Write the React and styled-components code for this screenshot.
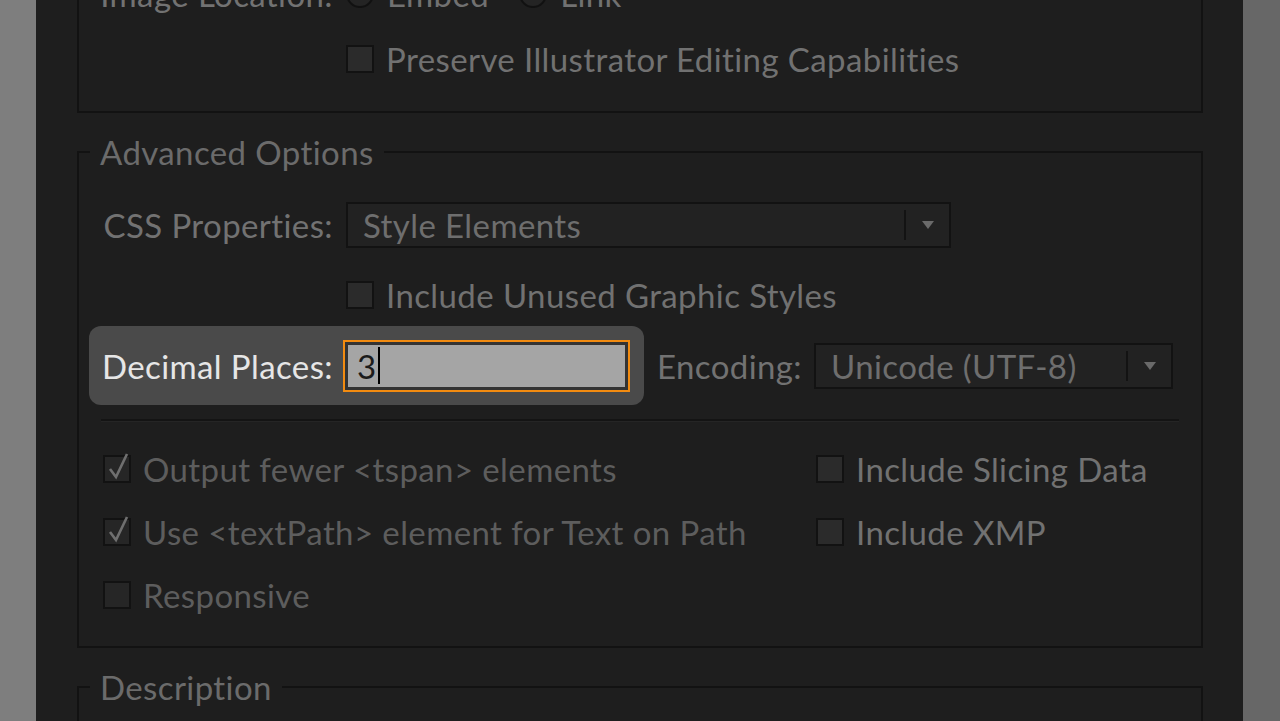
import styled, { createGlobalStyle } from 'styled-components';

const GlobalStyle = createGlobalStyle`
  html, body {
    margin: 0;
    padding: 0;
    background: #1e1e1e;
    overflow: hidden;
  }
  body {
    font-family: Lato, "Liberation Sans", sans-serif;
    letter-spacing: 0.4px;
  }
`;

const Screen = styled.div`
  display: flex;
  width: 1280px;
  height: 721px;
  overflow: hidden;
`;

const SideStrip = styled.div`
  flex: 0 0 ${(p) => p.$width}px;
  background: ${(p) => p.$color};
`;

const Dialog = styled.div`
  flex: 1;
  min-width: 0;
  background: #1e1e1e;
  padding: 0 40px 0 41px;
  overflow: hidden;
`;

const Content = styled.div`
  margin-top: -60px;
  display: flex;
  flex-direction: column;
  gap: 23px;
`;

const Group = styled.fieldset`
  margin: 0;
  min-width: 0;
  padding: ${(p) => p.$pt || 0}px 0 ${(p) => p.$pb || 0}px;
  border: 2px solid #121212;
  min-height: ${(p) => p.$minH || 0}px;
`;

const Legend = styled.legend`
  margin-left: 11px;
  padding: 0 10px;
  font-size: 33px;
  line-height: 32px;
  color: #6b6b6b;
`;

const FieldRow = styled.div`
  display: flex;
  align-items: center;
  height: ${(p) => p.$h}px;
  margin-top: ${(p) => p.$mt || 0}px;
  padding-left: ${(p) => p.$indent || 0}px;
`;

const Label = styled.span`
  flex: 0 0 ${(p) => p.$w || 267}px;
  box-sizing: border-box;
  padding-right: ${(p) => p.$gap || 13}px;
  text-align: right;
  font-size: 33px;
  color: ${(p) => (p.$bright ? '#e6e6e6' : '#727272')};
  white-space: nowrap;
`;

const Text = styled.span`
  font-size: 33px;
  color: ${(p) => (p.$dim ? '#5d5d5d' : '#717171')};
  white-space: nowrap;
`;

const Radio = styled.span`
  flex: 0 0 28px;
  height: 28px;
  box-sizing: border-box;
  border-radius: 50%;
  border: 2px solid #111;
  background: #242424;
  margin-right: 13px;
  display: flex;
  align-items: center;
  justify-content: center;
  &::after {
    content: '';
    width: 10px;
    height: 10px;
    border-radius: 50%;
    background: ${(p) => (p.$on ? '#555' : 'transparent')};
  }
`;

const RadioOption = styled.span`
  display: flex;
  align-items: center;
  margin-right: 30px;
`;

const Box = styled.span`
  position: relative;
  flex: 0 0 28px;
  height: 28px;
  box-sizing: border-box;
  border: 2px solid #121212;
  background: ${(p) => (p.$dim ? '#262626' : '#2b2b2b')};
  margin-right: 12px;
`;

const Tick = styled.svg`
  position: absolute;
  left: 2px;
  top: -5px;
  overflow: visible;
`;

const Select = styled.div`
  display: flex;
  align-items: center;
  width: ${(p) => p.$w}px;
  height: 46px;
  box-sizing: border-box;
  border: 2px solid #121212;
  background: #222;
`;

const SelectText = styled.span`
  flex: 1;
  padding-left: 15px;
  font-size: 33px;
  color: #6e6e6e;
  white-space: nowrap;
`;

const SelectDivider = styled.span`
  width: 2px;
  height: 30px;
  background: #131313;
`;

const ArrowCell = styled.span`
  flex: 0 0 43px;
  display: flex;
  align-items: center;
  justify-content: center;
`;

const Highlight = styled.div`
  display: flex;
  align-items: center;
  height: 79px;
  margin-left: 10px;
  padding-right: 14px;
  border-radius: 12px;
  background: #4a4a4a;
`;

const NumberField = styled.div`
  display: flex;
  align-items: center;
  width: 287px;
  height: 52px;
  box-sizing: border-box;
  border: 2px solid #f28b10;
  background: #a5a5a5;
  box-shadow: inset 0 0 0 3px #333;
  padding-left: 12px;
  font-size: 33px;
  color: #1b1b1b;
`;

const Caret = styled.span`
  width: 2px;
  height: 37px;
  margin-left: 1px;
  background: #000;
`;

const EncodingLabel = styled.span`
  margin: 0 12px 0 13px;
  font-size: 33px;
  color: #727272;
`;

const Divider = styled.div`
  margin: 14px 22px 0;
  height: 2px;
  background: #141414;
  box-shadow: 0 1px 0 #252525;
`;

const OptionGrid = styled.div`
  display: grid;
  grid-template-columns: 713px 1fr;
  grid-auto-rows: 28px;
  row-gap: 35px;
  margin-top: 34px;
  padding-left: 24px;
`;

const Option = styled.div`
  display: flex;
  align-items: center;
`;

function Checkbox({ checked, dim }) {
  return (
    <Box $dim={dim}>
      {checked && (
        <Tick width="24" height="28" viewBox="0 0 24 28">
          <path d="M3 17 L9 25 L20 2" fill="none" stroke="#6f6f6f" strokeWidth="2.6" />
        </Tick>
      )}
    </Box>
  );
}

function Dropdown({ width, value }) {
  return (
    <Select $w={width}>
      <SelectText>{value}</SelectText>
      <SelectDivider />
      <ArrowCell>
        <svg width="14" height="10" viewBox="0 0 14 10">
          <path d="M1 1 H13 L7 9 Z" fill="#6a6a6a" />
        </svg>
      </ArrowCell>
    </Select>
  );
}

const options = [
  { label: 'Output fewer <tspan> elements', checked: true, dim: true },
  { label: 'Include Slicing Data' },
  { label: 'Use <textPath> element for Text on Path', checked: true, dim: true },
  { label: 'Include XMP' },
  { label: 'Responsive', dim: true },
];

export default function App() {
  return (
    <>
      <GlobalStyle />
      <Screen>
        <SideStrip $width={36} $color="#7e7e7e" />
        <Dialog>
          <Content>
            <Group $pt={29} $pb={38}>
              <FieldRow $h={46}>
                <Label>Image Location:</Label>
                <RadioOption>
                  <Radio />
                  <Text>Embed</Text>
                </RadioOption>
                <RadioOption>
                  <Radio $on />
                  <Text>Link</Text>
                </RadioOption>
              </FieldRow>
              <FieldRow $h={28} $mt={28} $indent={267}>
                <Checkbox />
                <Text>Preserve Illustrator Editing Capabilities</Text>
              </FieldRow>
            </Group>

            <Group $pt={34} $pb={37}>
              <Legend>Advanced Options</Legend>
              <FieldRow $h={46}>
                <Label>CSS Properties:</Label>
                <Dropdown width={605} value="Style Elements" />
              </FieldRow>
              <FieldRow $h={28} $mt={33} $indent={267}>
                <Checkbox />
                <Text>Include Unused Graphic Styles</Text>
              </FieldRow>
              <FieldRow $h={79} $mt={17}>
                <Highlight>
                  <Label $w={254} $gap={10} $bright>
                    Decimal Places:
                  </Label>
                  <NumberField>
                    3<Caret />
                  </NumberField>
                </Highlight>
                <EncodingLabel>Encoding:</EncodingLabel>
                <Dropdown width={359} value="Unicode (UTF-8)" />
              </FieldRow>
              <Divider />
              <OptionGrid>
                {options.map((o) => (
                  <Option key={o.label}>
                    <Checkbox checked={o.checked} dim={o.dim} />
                    <Text $dim={o.dim}>{o.label}</Text>
                  </Option>
                ))}
              </OptionGrid>
            </Group>

            <Group $minH={120}>
              <Legend>Description</Legend>
            </Group>
          </Content>
        </Dialog>
        <SideStrip $width={37} $color="#676767" />
      </Screen>
    </>
  );
}
